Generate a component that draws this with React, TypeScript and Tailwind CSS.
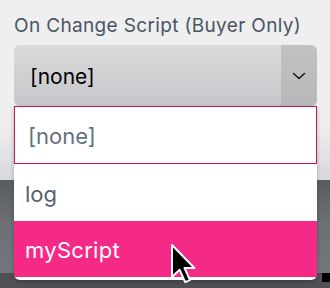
import React from "react";

export default function App() {
  return (
    <div
      className="relative w-[330px] h-[288px] overflow-hidden flex flex-col"
      style={{ fontFamily: "Inter, 'Noto Sans', sans-serif" }}
    >
      <div className="h-[180px] bg-[linear-gradient(to_bottom,#efefef_0%,#efefef_70%,#d6d8dd_100%)] px-[14px] pt-[15px]">
        <div className="text-[19px] leading-[22px] text-[#4b5566] tracking-[0.35px] whitespace-nowrap">
          On Change Script (Buyer Only)
        </div>
        <div className="mt-[8px] h-[61px] w-[303px] rounded-[6px] overflow-hidden flex bg-[linear-gradient(to_bottom,#dadada,#c6c7cb)]">
          <div className="flex-1 flex items-center pl-[16px] pt-[3px] text-[21px] text-black">[none]</div>
          <div className="w-[36px] bg-[linear-gradient(to_bottom,#c2c2c2,#b6b7ba)] flex items-center justify-center">
            <svg width="14" height="8" viewBox="0 0 14 8" fill="none">
              <path d="M1.5 1.5 L7 6.5 L12.5 1.5" stroke="#111" strokeWidth="1.4" strokeLinecap="round" strokeLinejoin="round" />
            </svg>
          </div>
        </div>
      </div>
      <div className="flex-1 flex flex-col bg-[linear-gradient(to_bottom,#585b60,#6d7075_40%,#74777b)]">
        <div className="flex-1" />
        <div className="h-[15px] bg-[#4f5156] flex justify-end">
          <div className="w-[8px] h-[9px] bg-black" />
        </div>
      </div>

      <div className="absolute left-[14px] top-[106px] w-[303px] bg-white rounded-b-[6px] pb-[3px] shadow-[0_2px_4px_rgba(0,0,0,0.25)]">
        <div className="h-[58px] border border-[#c2185b] flex items-center pl-[13px] pt-[3px] text-[22px] text-[#637083]">
          [none]
        </div>
        <div className="h-[57px] flex items-center pl-[11px] pt-[3px] text-[22px] text-[#556070]">log</div>
        <div className="h-[56px] bg-[#f42a86] flex items-center pl-[11px] pt-[3px] text-[22px] text-white tracking-[0.3px]">myScript</div>
      </div>

      <svg
        className="absolute left-[170px] top-[243px]"
        width="26"
        height="42"
        viewBox="0 0 13 21"
      >
        <path
          d="M1 1 L1 17 L4.8 13.4 L7.6 19.6 L10 18.6 L7.3 12.5 L12.2 12.5 Z"
          fill="#000"
          stroke="#fff"
          strokeWidth="1"
          strokeLinejoin="round"
        />
      </svg>
    </div>
  );
}
